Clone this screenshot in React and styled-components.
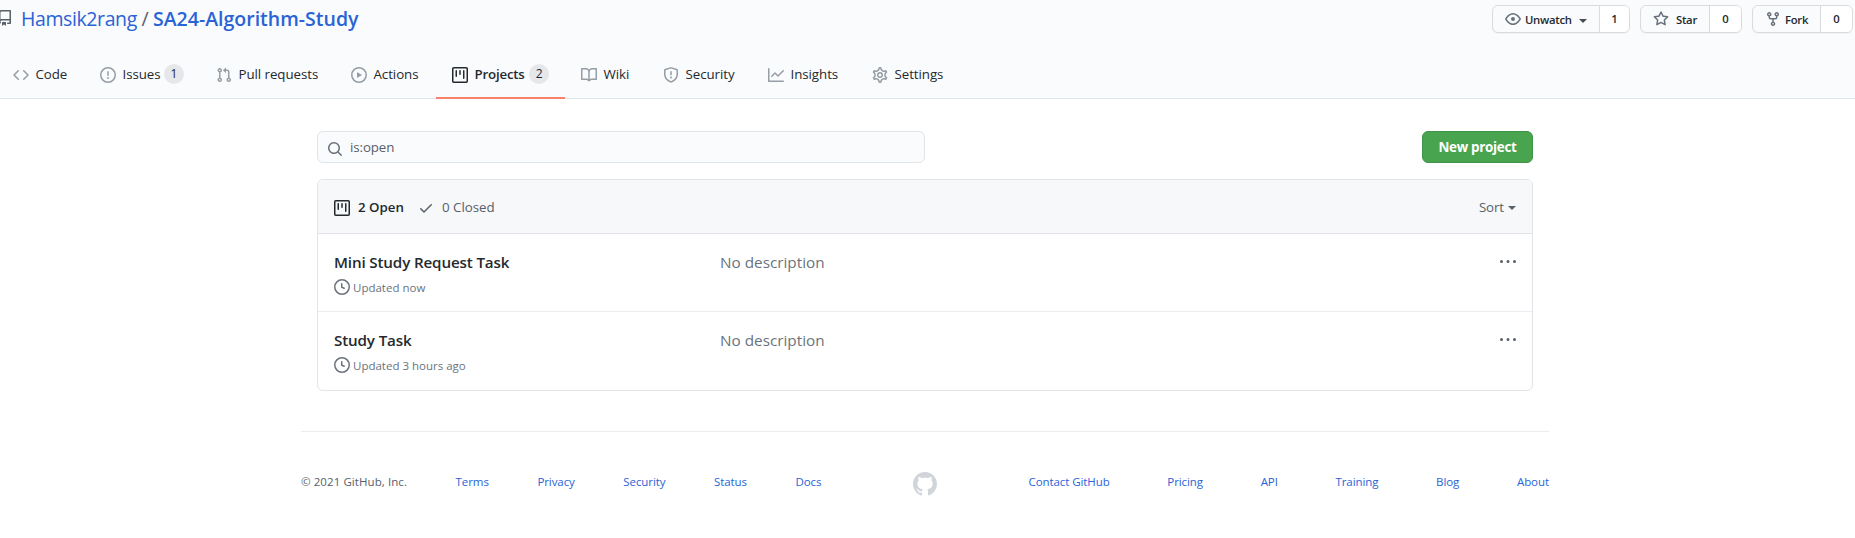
import React from "react";
import styled, { createGlobalStyle } from "styled-components";

const GlobalStyle = createGlobalStyle`
  * { box-sizing: border-box; }
  body {
    margin: 0;
    background: #fff;
    color: #24292e;
    font-family: "Open Sans", "Noto Sans", sans-serif;
    font-size: 13.3px;
    line-height: 20px;
    overflow: hidden;
  }
  a { color: inherit; text-decoration: none; }
  button { font-family: inherit; margin: 0; cursor: pointer; }
`;

const paths = {
  repo: "M2 2.5A2.5 2.5 0 014.5 0h8.75a.75.75 0 01.75.75v12.5a.75.75 0 01-.75.75h-2.5a.75.75 0 110-1.5h1.75v-2h-8a1 1 0 00-.714 1.7.75.75 0 01-1.072 1.05A2.495 2.495 0 012 11.5v-9zm10.5-1V9h-8c-.356 0-.694.074-1 .208V2.5a1 1 0 011-1h8zM5 12.25v3.25a.25.25 0 00.4.2l1.45-1.087a.25.25 0 01.3 0L8.6 15.7a.25.25 0 00.4-.2v-3.25a.25.25 0 00-.25-.25h-3.5a.25.25 0 00-.25.25z",
  code: "M4.72 3.22a.75.75 0 011.06 1.06L2.06 8l3.72 3.72a.75.75 0 11-1.06 1.06L.47 8.53a.75.75 0 010-1.06l4.25-4.25zm6.56 0a.75.75 0 10-1.06 1.06L13.94 8l-3.72 3.72a.75.75 0 101.06 1.06l4.25-4.25a.75.75 0 000-1.06l-4.25-4.25z",
  issue: "M8 1.5a6.5 6.5 0 100 13 6.5 6.5 0 000-13zM0 8a8 8 0 1116 0A8 8 0 010 8zm9 3a1 1 0 11-2 0 1 1 0 012 0zm-.25-6.25a.75.75 0 00-1.5 0v3.5a.75.75 0 001.5 0v-3.5z",
  pull: "M7.177 3.073L9.573.677A.25.25 0 0110 .854v4.792a.25.25 0 01-.427.177L7.177 3.427a.25.25 0 010-.354zM3.75 2.5a.75.75 0 100 1.5.75.75 0 000-1.5zm-2.25.75a2.25 2.25 0 113 2.122v5.256a2.251 2.251 0 11-1.5 0V5.372A2.25 2.25 0 011.5 3.25zM11 2.5h-1V4h1a1 1 0 011 1v5.628a2.251 2.251 0 101.5 0V5A2.5 2.5 0 0011 2.5zm1 10.25a.75.75 0 111.5 0 .75.75 0 01-1.5 0zM3.75 12a.75.75 0 100 1.5.75.75 0 000-1.5z",
  play: "M1.5 8a6.5 6.5 0 1113 0 6.5 6.5 0 01-13 0zM8 0a8 8 0 100 16A8 8 0 008 0zM6.379 5.227A.25.25 0 006 5.442v5.117a.25.25 0 00.379.214l4.264-2.559a.25.25 0 000-.428L6.379 5.227z",
  project: "M1.75 0A1.75 1.75 0 000 1.75v12.5C0 15.216.784 16 1.75 16h12.5A1.75 1.75 0 0016 14.25V1.75A1.75 1.75 0 0014.25 0H1.75zM1.5 1.75a.25.25 0 01.25-.25h12.5a.25.25 0 01.25.25v12.5a.25.25 0 01-.25.25H1.75a.25.25 0 01-.25-.25V1.75zM11.75 3a.75.75 0 00-.75.75v7.5a.75.75 0 001.5 0v-7.5a.75.75 0 00-.75-.75zm-8.25.75a.75.75 0 011.5 0v5.5a.75.75 0 01-1.5 0v-5.5zM8 3a.75.75 0 00-.75.75v3.5a.75.75 0 001.5 0v-3.5A.75.75 0 008 3z",
  book: "M0 1.75A.75.75 0 01.75 1h4.253c1.227 0 2.317.59 3 1.501A3.744 3.744 0 0111.006 1h4.245a.75.75 0 01.75.75v10.5a.75.75 0 01-.75.75h-4.507a2.25 2.25 0 00-1.591.659l-.622.621a.75.75 0 01-1.06 0l-.622-.621A2.25 2.25 0 005.258 13H.75a.75.75 0 01-.75-.75V1.75zm8.755 3a2.25 2.25 0 012.25-2.25H14.5v9h-3.757c-.71 0-1.4.201-1.992.572l.004-7.322zm-1.504 7.324l.004-5.073-.002-2.253A2.25 2.25 0 005.003 2.5H1.5v9h3.757a3.75 3.75 0 011.994.574z",
  shield: "M7.467.133a1.75 1.75 0 011.066 0l5.25 1.68A1.75 1.75 0 0115 3.48V7c0 1.566-.32 3.182-1.303 4.682-.983 1.498-2.585 2.813-5.032 3.855a1.7 1.7 0 01-1.33 0c-2.447-1.042-4.049-2.357-5.032-3.855C1.32 10.182 1 8.566 1 7V3.48a1.75 1.75 0 011.217-1.667l5.25-1.68zm.61 1.429a.25.25 0 00-.153 0l-5.25 1.68a.25.25 0 00-.174.238V7c0 1.358.275 2.666 1.057 3.86.784 1.194 2.121 2.34 4.366 3.297a.2.2 0 00.154 0c2.245-.956 3.582-2.104 4.366-3.298C13.225 9.666 13.5 8.36 13.5 7V3.48a.25.25 0 00-.174-.237l-5.25-1.68zM9 10.5a1 1 0 11-2 0 1 1 0 012 0zm-.25-5.75a.75.75 0 10-1.5 0v3a.75.75 0 001.5 0v-3z",
  graph: "M1.5 1.75a.75.75 0 00-1.5 0v12.5c0 .414.336.75.75.75h14.5a.75.75 0 000-1.5H1.5V1.75zm14.28 2.53a.75.75 0 00-1.06-1.06L10 7.94 7.53 5.47a.75.75 0 00-1.06 0L3.22 8.72a.75.75 0 001.06 1.06L7 7.06l2.47 2.47a.75.75 0 001.06 0l5.25-5.25z",
  gear: "M7.429 1.525a6.593 6.593 0 011.142 0c.036.003.108.036.137.146l.289 1.105c.147.56.55.967.997 1.189.174.086.341.183.501.29.417.278.97.423 1.53.27l1.102-.303c.11-.03.175.016.195.046.219.31.41.641.573.989.014.031.022.11-.059.19l-.815.806c-.411.406-.562.957-.53 1.456a4.588 4.588 0 010 .582c-.032.499.119 1.05.53 1.456l.815.806c.08.08.073.159.059.19a6.494 6.494 0 01-.573.99c-.02.029-.086.074-.195.045l-1.103-.303c-.559-.153-1.112-.008-1.529.27-.16.107-.327.204-.5.29-.449.222-.851.628-.998 1.189l-.289 1.105c-.029.11-.101.143-.137.146a6.613 6.613 0 01-1.142 0c-.036-.003-.108-.037-.137-.146l-.289-1.105c-.147-.56-.55-.967-.997-1.189a4.502 4.502 0 01-.501-.29c-.417-.278-.97-.423-1.53-.27l-1.102.303c-.11.03-.175-.016-.195-.046a6.492 6.492 0 01-.573-.989c-.014-.031-.022-.11.059-.19l.815-.806c.411-.406.562-.957.53-1.456a4.587 4.587 0 010-.582c.032-.499-.119-1.05-.53-1.456l-.815-.806c-.08-.08-.073-.159-.059-.19a6.44 6.44 0 01.573-.99c.02-.029.086-.075.195-.045l1.103.303c.559.153 1.112.008 1.529-.27.16-.107.327-.204.5-.29.449-.222.851-.628.998-1.189l.289-1.105c.029-.11.101-.143.137-.146z",
  eye: "M1.679 7.932c.412-.621 1.242-1.75 2.366-2.717C5.175 4.242 6.527 3.5 8 3.5c1.473 0 2.824.742 3.955 1.715 1.124.967 1.954 2.096 2.366 2.717a.119.119 0 010 .136c-.412.621-1.242 1.75-2.366 2.717C10.825 11.758 9.473 12.5 8 12.5c-1.473 0-2.824-.742-3.955-1.715C2.92 9.818 2.09 8.69 1.679 8.068a.119.119 0 010-.136zM8 2c-1.981 0-3.67.992-4.933 2.078C1.797 5.169.88 6.423.43 7.1a1.619 1.619 0 000 1.798c.45.678 1.367 1.932 2.637 3.024C4.329 13.008 6.019 14 8 14c1.981 0 3.67-.992 4.933-2.078 1.27-1.091 2.187-2.345 2.637-3.023a1.619 1.619 0 000-1.798c-.45-.678-1.367-1.932-2.637-3.023C11.671 2.992 9.981 2 8 2zm0 8a2 2 0 100-4 2 2 0 000 4z",
  star: "M8 .25a.75.75 0 01.673.418l1.882 3.815 4.21.612a.75.75 0 01.416 1.279l-3.046 2.97.719 4.192a.75.75 0 01-1.088.791L8 12.347l-3.766 1.98a.75.75 0 01-1.088-.79l.72-4.194L.818 6.374a.75.75 0 01.416-1.28l4.21-.611L7.327.668A.75.75 0 018 .25zm0 2.445L6.615 5.5a.75.75 0 01-.564.41l-3.097.45 2.24 2.184a.75.75 0 01.216.664l-.528 3.084 2.769-1.456a.75.75 0 01.698 0l2.77 1.456-.53-3.084a.75.75 0 01.216-.664l2.24-2.183-3.096-.45a.75.75 0 01-.564-.41L8 2.694v.001z",
  fork: "M5 3.25a.75.75 0 11-1.5 0 .75.75 0 011.5 0zm0 2.122a2.25 2.25 0 10-1.5 0v.878A2.25 2.25 0 005.75 8.5h1.5v2.128a2.251 2.251 0 101.5 0V8.5h1.5a2.25 2.25 0 002.25-2.25v-.878a2.25 2.25 0 10-1.5 0v.878a.75.75 0 01-.75.75h-4.5A.75.75 0 015 6.25v-.878zm3.75 7.378a.75.75 0 11-1.5 0 .75.75 0 011.5 0zm3-8.75a.75.75 0 100-1.5.75.75 0 000 1.5z",
  clock: "M1.5 8a6.5 6.5 0 1113 0 6.5 6.5 0 01-13 0zM8 0a8 8 0 100 16A8 8 0 008 0zm.5 4.75a.75.75 0 00-1.5 0v3.5a.75.75 0 00.471.696l2.5 1a.75.75 0 00.557-1.392L8.5 7.742V4.75z",
  search: "M11.5 7a4.499 4.499 0 11-8.998 0A4.499 4.499 0 0111.5 7zm-.82 4.74a6 6 0 111.06-1.06l3.04 3.04a.75.75 0 11-1.06 1.06l-3.04-3.04z",
  check: "M13.78 4.22a.75.75 0 010 1.06l-7.25 7.25a.75.75 0 01-1.06 0L2.22 9.28a.75.75 0 011.06-1.06L6 10.94l6.72-6.72a.75.75 0 011.06 0z",
  kebab: "M8 9a1.5 1.5 0 100-3 1.5 1.5 0 000 3zM1.5 9a1.5 1.5 0 100-3 1.5 1.5 0 000 3zm13 0a1.5 1.5 0 100-3 1.5 1.5 0 000 3z",
  mark: "M8 0C3.58 0 0 3.58 0 8c0 3.54 2.29 6.53 5.47 7.59.4.07.55-.17.55-.38 0-.19-.01-.82-.01-1.49-2.01.37-2.53-.49-2.69-.94-.09-.23-.48-.94-.82-1.13-.28-.15-.68-.52-.01-.53.63-.01 1.08.58 1.23.82.72 1.21 1.87.87 2.33.66.07-.52.28-.87.51-1.07-1.78-.2-3.64-.89-3.64-3.95 0-.87.31-1.59.82-2.15-.08-.2-.36-1.02.08-2.12 0 0 .67-.21 2.2.82.64-.18 1.32-.27 2-.27.68 0 1.36.09 2 .27 1.53-1.04 2.2-.82 2.2-.82.44 1.1.16 1.92.08 2.12.51.56.82 1.27.82 2.15 0 3.07-1.87 3.75-3.65 3.95.29.25.54.73.54 1.48 0 1.07-.01 1.93-.01 2.2 0 .21.15.46.55.38A8.013 8.013 0 0016 8c0-4.42-3.58-8-8-8z",
};

const Svg = styled.svg`
  display: block;
  flex: none;
  fill: ${(p) => p.$color || "currentColor"};
  stroke: none;
`;

function Icon({ name, size = 16, color, className }) {
  return (
    <Svg className={className} viewBox="0 0 16 16" width={size} height={size} $color={color} aria-hidden="true">
      {name === "gear" ? (
        <g fill="none" stroke={color}>
          <path d={paths.gear} strokeWidth="1.36" transform="translate(-0.85 -0.85) scale(1.106)" />
          <circle cx="8" cy="8" r="2.25" strokeWidth="1.5" />
        </g>
      ) : (
        <path fillRule="evenodd" d={paths[name]} />
      )}
    </Svg>
  );
}

const Caret = styled.span`
  flex: none;
  width: 8px;
  height: 4px;
  border: 4px solid transparent;
  border-top-color: currentColor;
  border-bottom: 0;
`;

const Header = styled.header`
  display: flex;
  flex-direction: column;
  justify-content: space-between;
  height: 99px;
  background: #fafbfc;
  border-bottom: 1px solid #e1e4e8;
`;

const TitleBar = styled.div`
  display: flex;
  justify-content: space-between;
  padding: 5px 2px 0 0;
`;

const Title = styled.h1`
  display: flex;
  align-items: center;
  margin: 0 0 0 -3px;
  height: 28px;
  font-size: 19.5px;
  font-weight: 400;
  line-height: 28px;
  color: #586069;
  white-space: nowrap;
`;

const TitleIcon = styled(Icon)`
  margin: 0 8px 2px 0;
`;

const Owner = styled.a`
  width: 116px;
  color: #2963d6;
  letter-spacing: -0.4px;
`;

const Slash = styled.span`
  width: 16px;
  text-align: center;
`;

const RepoName = styled.a`
  color: #2963d6;
  font-weight: 600;
  letter-spacing: 0;
`;

const Actions = styled.div`
  display: flex;
  gap: 10px;
`;

const ButtonGroup = styled.div`
  display: flex;
  width: ${(p) => p.$width}px;
  height: 28px;
  border: 1px solid #d9dbde;
  border-radius: 6px;
  overflow: hidden;
  font-size: 11.3px;
  font-weight: 600;
  background: #fafbfc;
  box-shadow: 0 1px 0 rgba(27, 31, 35, 0.04);
`;

const ActionButton = styled.button`
  display: flex;
  align-items: center;
  flex: 1;
  gap: ${(p) => p.$gap}px;
  padding: 0 0 0 12px;
  border: 0;
  background: transparent;
  color: #24292e;
  font-size: 11.3px;
  font-weight: 600;
  letter-spacing: -0.28px;
`;

const ActionIcon = styled(Icon)`
  margin-bottom: 0;
`;

const ActionCaret = styled(Caret)`
  margin: 3px 0 0 3px;
  color: #444d56;
`;

const Count = styled.a`
  display: flex;
  align-items: center;
  justify-content: center;
  width: ${(p) => p.$width}px;
  border-left: 1px solid #d9dbde;
  background: #fff;
`;

const Nav = styled.nav`
  display: flex;
  height: 50px;
  margin: 0 0 -1px -3px;
`;

const Tab = styled.a`
  display: flex;
  align-items: center;
  padding: 0 16px 0 16px;
  border-bottom: 2px solid ${(p) => (p.$active ? "#f9826c" : "transparent")};
  font-weight: ${(p) => (p.$active ? 600 : 400)};
  letter-spacing: ${(p) => (p.$active ? -0.2 : -0.05)}px;
`;

const TabIcon = styled(Icon)`
  margin: 3px 6px 0 0;
`;

const TabLabel = styled.span`
  width: ${(p) => p.$width}px;
  margin-top: 2px;
  padding-left: 0.5px;
  white-space: nowrap;
`;

const Badge = styled.span`
  width: 20px;
  height: 20px;
  margin: 2px 0 0 4px;
  border-radius: 10px;
  background: #e5e7ea;
  font-size: 12px;
  font-weight: 400;
  line-height: 20px;
  text-align: center;
`;

const Main = styled.main`
  width: 1216px;
  margin: 32px 0 0 317px;
`;

const Toolbar = styled.div`
  display: flex;
  justify-content: space-between;
  height: 32px;
`;

const SearchField = styled.div`
  display: flex;
  align-items: center;
  width: 608px;
  padding-left: 9px;
  gap: 7px;
  border: 1px solid #e1e4e8;
  border-radius: 6px;
  background: #fafbfc;
  color: #586069;
  letter-spacing: -0.1px;
`;

const SearchIcon = styled(Icon)`
  margin-top: 3px;
`;

const NewButton = styled.button`
  width: 111px;
  padding: 0;
  border: 1px solid #3f9547;
  border-radius: 6px;
  background: #48a44e;
  color: #fff;
  font-size: 13.4px;
  font-weight: 700;
  letter-spacing: -0.3px;
  line-height: 20px;
`;

const Box = styled.section`
  margin-top: 16px;
  border: 1px solid #e1e4e8;
  border-radius: 6px;
  overflow: hidden;
`;

const BoxHeader = styled.div`
  display: flex;
  align-items: center;
  height: 54px;
  padding: 0 16px;
  border-bottom: 1px solid #e1e4e8;
  background: #f6f8fa;
  color: #586069;
`;

const State = styled.a`
  display: flex;
  align-items: center;
  gap: 8px;
  width: ${(p) => p.$width}px;
  color: ${(p) => (p.$active ? "#24292e" : "#586069")};
  font-weight: ${(p) => (p.$active ? 600 : 400)};
  white-space: nowrap;
`;

const StateIcon = styled(Icon)`
  margin-top: 3px;
`;

const Sort = styled.a`
  display: flex;
  align-items: center;
  gap: 4px;
  margin-left: auto;
  color: #586069;
  letter-spacing: -0.1px;
`;

const SortCaret = styled(Caret)`
  margin-top: 2px;
`;

const Row = styled.article`
  display: flex;
  height: 77px;
  padding: 16px 16px 0;

  & + & {
    border-top: 1px solid #eaecef;
    height: 79px;
  }
`;

const Summary = styled.div`
  width: 386px;
`;

const ProjectName = styled.h4`
  margin: 0;
  font-size: 15.2px;
  font-weight: 600;
  line-height: 24px;
  letter-spacing: -0.15px;
`;

const Updated = styled.div`
  display: flex;
  align-items: center;
  gap: 3px;
  height: 16px;
  margin-top: 5px;
  color: #6a737d;
  font-size: 11.5px;
`;

const UpdatedText = styled.span`
  margin-top: 2px;
`;

const Description = styled.div`
  flex: 1;
  color: #6a737d;
  font-size: 15.3px;
  line-height: 24px;
`;

const RowMenu = styled(Icon)`
  margin-top: 4px;
`;

const Footer = styled.footer`
  display: flex;
  justify-content: space-between;
  width: 1248px;
  margin: 40px 0 0 301px;
  padding-top: 40px;
  border-top: 1px solid #eaecef;
  font-size: 11.5px;
`;

const FooterList = styled.div`
  display: flex;
  justify-content: space-between;
  width: ${(p) => p.$width}px;
  height: 20px;
  white-space: nowrap;
  letter-spacing: -0.08px;
`;

const FooterLink = styled.a`
  color: #2963d6;
`;

const FooterNote = styled.span`
  color: #586069;
  letter-spacing: 0.08px;
`;

const tabs = [
  { icon: "code", label: "Code", width: 33 },
  { icon: "issue", label: "Issues", width: 38, count: 1 },
  { icon: "pull", label: "Pull requests", width: 81 },
  { icon: "play", label: "Actions", width: 47 },
  { icon: "project", label: "Projects", width: 51, count: 2, active: true },
  { icon: "book", label: "Wiki", width: 28 },
  { icon: "shield", label: "Security", width: 51 },
  { icon: "graph", label: "Insights", width: 50 },
  { icon: "gear", label: "Settings", width: 52 },
];

const actions = [
  { icon: "eye", label: "Unwatch", count: 1, width: 138, countWidth: 30, gap: 4, caret: true },
  { icon: "star", label: "Star", count: 0, width: 102, countWidth: 32, gap: 7 },
  { icon: "fork", label: "Fork", count: 0, width: 101, countWidth: 32, gap: 4 },
];

const projects = [
  { name: "Mini Study Request Task", updated: "Updated now" },
  { name: "Study Task", updated: "Updated 3 hours ago" },
];

const footerLeft = ["Terms", "Privacy", "Security", "Status", "Docs"];
const footerRight = ["Contact GitHub", "Pricing", "API", "Training", "Blog", "About"];

export default function App() {
  return (
    <>
      <GlobalStyle />
      <Header>
        <TitleBar>
          <Title>
            <TitleIcon name="repo" color="#586069" />
            <Owner href="#">Hamsik2rang</Owner>
            <Slash>/</Slash>
            <RepoName href="#">SA24-Algorithm-Study</RepoName>
          </Title>
          <Actions>
            {actions.map((a) => (
              <ButtonGroup key={a.label} $width={a.width}>
                <ActionButton $gap={a.gap}>
                  <ActionIcon name={a.icon} color="#6a737d" />
                  {a.label}
                  {a.caret && <ActionCaret />}
                </ActionButton>
                <Count href="#" $width={a.countWidth}>{a.count}</Count>
              </ButtonGroup>
            ))}
          </Actions>
        </TitleBar>
        <Nav>
          {tabs.map((t) => (
            <Tab key={t.label} href="#" $active={t.active}>
              <TabIcon name={t.icon} color={t.active ? "#24292e" : "#959da5"} />
              <TabLabel $width={t.width}>{t.label}</TabLabel>
              {t.count && <Badge>{t.count}</Badge>}
            </Tab>
          ))}
        </Nav>
      </Header>
      <Main>
        <Toolbar>
          <SearchField>
            <SearchIcon name="search" color="#6a737d" />
            is:open
          </SearchField>
          <NewButton>New project</NewButton>
        </Toolbar>
        <Box>
          <BoxHeader>
            <State href="#" $width={84} $active>
              <StateIcon name="project" />2 Open
            </State>
            <State href="#" $width={90}>
              <StateIcon name="check" />0 Closed
            </State>
            <Sort href="#">
              Sort
              <SortCaret />
            </Sort>
          </BoxHeader>
          {projects.map((p) => (
            <Row key={p.name}>
              <Summary>
                <ProjectName>{p.name}</ProjectName>
                <Updated>
                  <Icon name="clock" />
                  <UpdatedText>{p.updated}</UpdatedText>
                </Updated>
              </Summary>
              <Description>No description</Description>
              <RowMenu name="kebab" color="#586069" />
            </Row>
          ))}
        </Box>
      </Main>
      <Footer>
        <FooterList $width={520.5}>
          <FooterNote>© 2021 GitHub, Inc.</FooterNote>
          {footerLeft.map((l) => (
            <FooterLink key={l} href="#">{l}</FooterLink>
          ))}
        </FooterList>
        <Icon name="mark" size={24} color="#d1d5da" />
        <FooterList $width={520.5}>
          {footerRight.map((l) => (
            <FooterLink key={l} href="#">{l}</FooterLink>
          ))}
        </FooterList>
      </Footer>
    </>
  );
}
